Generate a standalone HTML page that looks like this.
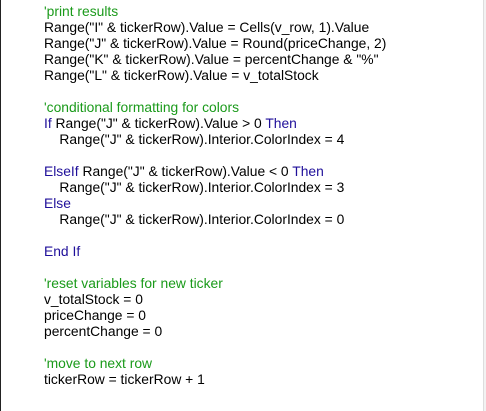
<!DOCTYPE html>
<html><head><meta charset="utf-8"><style>
body{margin:0;width:486px;height:411px;background:#fff;overflow:hidden;position:relative;font-family:"Liberation Sans",sans-serif;}
.l{position:absolute;left:0;top:0;width:1px;height:411px;background:#222;}
.sb{position:absolute;left:483px;top:0;width:3px;height:411px;background:#f2f2f2;border-left:1px solid #ddd;}
pre{margin:0;position:absolute;left:44px;top:3px;font-family:"Liberation Sans",sans-serif;font-size:13.85px;line-height:16px;color:#000;}
.c{color:#1a9a1a}.k{color:#1f0f9a}
</style></head><body>
<div class="l"></div><div class="sb"></div>
<pre><span class="c">'print results</span>
Range("I" &amp; tickerRow).Value = Cells(v_row, 1).Value
Range("J" &amp; tickerRow).Value = Round(priceChange, 2)
Range("K" &amp; tickerRow).Value = percentChange &amp; "%"
Range("L" &amp; tickerRow).Value = v_totalStock

<span class="c">'conditional formatting for colors</span>
<span class="k">If</span> Range("J" &amp; tickerRow).Value &gt; 0 <span class="k">Then</span>
    Range("J" &amp; tickerRow).Interior.ColorIndex = 4

<span class="k">ElseIf</span> Range("J" &amp; tickerRow).Value &lt; 0 <span class="k">Then</span>
    Range("J" &amp; tickerRow).Interior.ColorIndex = 3
<span class="k">Else</span>
    Range("J" &amp; tickerRow).Interior.ColorIndex = 0

<span class="k">End If</span>

<span class="c">'reset variables for new ticker</span>
v_totalStock = 0
priceChange = 0
percentChange = 0

<span class="c">'move to next row</span>
tickerRow = tickerRow + 1</pre>
</body></html>
